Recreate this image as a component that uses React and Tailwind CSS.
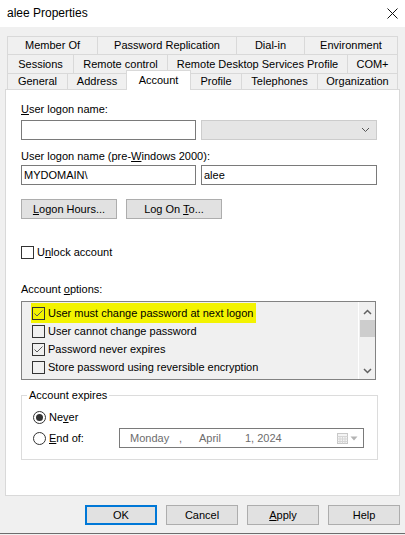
import React from "react";

const tabRows = [
  [
    ["Member Of", 90],
    ["Password Replication", 139],
    ["Dial-in", 68],
    ["Environment", 94],
  ],
  [
    ["Sessions", 66],
    ["Remote control", 94],
    ["Remote Desktop Services Profile", 180],
    ["COM+", 51],
  ],
];

const lastRow = [
  ["General", 60],
  ["Address", 59],
  ["Account", 65],
  ["Profile", 50],
  ["Telephones", 76],
  ["Organization", 81],
];

const options = [
  { label: "User must change password at next logon", checked: true, marked: true },
  { label: "User cannot change password", checked: false },
  { label: "Password never expires", checked: true },
  { label: "Store password using reversible encryption", checked: false },
];

const Check = ({ checked }) => (
  <span className="w-[13px] h-[13px] border border-[#333333] flex items-center justify-center shrink-0">
    {checked && (
      <svg width="11" height="11" viewBox="0 0 11 11">
        <path d="M1.5 5.5 L4 8 L9.5 2.5" stroke="#5a5a5a" strokeWidth="1" fill="none" />
      </svg>
    )}
  </span>
);

const Radio = ({ on }) => (
  <span className="w-[13px] h-[13px] rounded-full border border-[#333333] flex items-center justify-center shrink-0">
    {on && <span className="w-[7px] h-[7px] rounded-full bg-[#333333]" />}
  </span>
);

const Tab = ({ label, width, last }) => (
  <div
    className={`h-full flex items-center justify-center border-t border-l border-[#d9d9d9] ${last ? "border-r" : ""}`}
    style={{ width }}
  >
    {label}
  </div>
);

const Button = ({ children, main }) => (
  <button
    className={`w-[72px] h-[20px] flex items-center justify-center bg-[#e1e1e1] ${
      main ? "border-2 border-[#0078d7]" : "border border-[#adadad]"
    }`}
  >
    <span>{children}</span>
  </button>
);

export default function App() {
  return (
    <div className="w-[405px] h-[535px] bg-[#f0f0f0] flex flex-col text-[11px] leading-[13px] text-black font-['Liberation_Sans',Arial,sans-serif] overflow-hidden">
      {/* Title bar */}
      <div className="h-[27px] bg-white flex items-center justify-between pl-[7px] pr-[7px] shrink-0">
        <span className="text-[12px]">alee Properties</span>
        <svg width="11" height="11" viewBox="0 0 11 11">
          <path d="M0.5 0.5 L10.5 10.5 M10.5 0.5 L0.5 10.5" stroke="#111" strokeWidth="1" />
        </svg>
      </div>

      {/* Tabs */}
      <div className="pt-[9px] px-[7px]">
        <div className="flex h-[18px]">
          {tabRows[0].map(([l, w], i) => (
            <Tab key={l} label={l} width={w} last={i === 3} />
          ))}
        </div>
        <div className="flex h-[19px]">
          {tabRows[1].map(([l, w], i) => (
            <Tab key={l} label={l} width={w} last={i === 3} />
          ))}
        </div>
        <div className="flex h-[16px] items-start">
          {lastRow.map(([l, w], i) =>
            l === "Account" ? (
              <div
                key={l}
                className="relative z-10 -mt-[3px] h-[20px] bg-white border-t border-l border-r border-[#d9d9d9] flex items-start justify-center pt-[3px]"
                style={{ width: w }}
              >
                {l}
              </div>
            ) : (
              <div
                key={l}
                className={`h-full flex items-center justify-center border-t border-[#d9d9d9] ${
                  l === "Profile" ? "" : "border-l"
                } ${i === lastRow.length - 1 ? "border-r" : ""}`}
                style={{ width: w }}
              >
                {l}
              </div>
            )
          )}
        </div>
      </div>

      {/* Panel */}
      <div className="mx-[5px] h-[407px] bg-white border border-[#d9d9d9] pl-[15px] pt-[13px] shrink-0">
        <div>
          <span className="underline">U</span>ser logon name:
        </div>
        <div className="mt-[4px] flex gap-[5px]">
          <div className="w-[175px] h-[20px] border border-[#7a7a7a] bg-white" />
          <div className="w-[176px] h-[20px] border border-[#cccccc] bg-[#e5e5e5] flex items-center justify-end pr-[6px]">
            <svg width="9" height="6" viewBox="0 0 9 6">
              <path d="M1 1 L4.5 4.5 L8 1" stroke="#555" strokeWidth="1" fill="none" />
            </svg>
          </div>
        </div>

        <div className="mt-[10px]">
          User logon name (pre-<span className="underline">W</span>indows 2000):
        </div>
        <div className="mt-[2px] flex gap-[5px]">
          <div className="w-[175px] h-[20px] border border-[#7a7a7a] bg-white flex items-center pl-[2px]">
            MYDOMAIN\
          </div>
          <div className="w-[176px] h-[20px] border border-[#7a7a7a] bg-white flex items-center pl-[2px]">
            alee
          </div>
        </div>

        <div className="mt-[14px] flex gap-[9px]">
          <button className="w-[96px] h-[20px] bg-[#e1e1e1] border border-[#adadad] flex items-center justify-center">
            <span>
              <span className="underline">L</span>ogon Hours...
            </span>
          </button>
          <button className="w-[96px] h-[20px] bg-[#e1e1e1] border border-[#adadad] flex items-center justify-center">
            <span>
              Log On <span className="underline">T</span>o...
            </span>
          </button>
        </div>

        <div className="mt-[27px] flex items-center gap-[3px]">
          <Check />
          <span>
            U<span className="underline">n</span>lock account
          </span>
        </div>

        <div className="mt-[24px]">
          Account <span className="underline">o</span>ptions:
        </div>
        <div className="mt-[5px] w-[355px] h-[79px] border border-[#828282] bg-[#f0f0f0] flex">
          <div className="flex-1 pt-[2px] pl-[10px]">
            {options.map((o) => (
              <div key={o.label} className="h-[18px] flex items-center">
                {o.marked ? (
                  <div className="h-[20px] flex items-center gap-[3px] bg-[#f3f300] pl-[1px] pr-[3px] -ml-[1px]">
                    <Check checked />
                    <span>{o.label}</span>
                  </div>
                ) : (
                  <div className="flex items-center gap-[3px]">
                    <Check checked={o.checked} />
                    <span>{o.label}</span>
                  </div>
                )}
              </div>
            ))}
          </div>
          <div className="w-[17px] border-l border-white flex flex-col items-center justify-between pt-[7px] pb-[5px]">
            <div className="flex flex-col items-center gap-[5px] w-full">
              <svg width="9" height="6" viewBox="0 0 9 6">
                <path d="M1 5 L4.5 1.5 L8 5" stroke="#606060" strokeWidth="1.5" fill="none" />
              </svg>
              <div className="w-[15px] h-[17px] bg-[#cdcdcd]" />
            </div>
            <svg width="9" height="6" viewBox="0 0 9 6">
              <path d="M1 1 L4.5 4.5 L8 1" stroke="#606060" strokeWidth="1.5" fill="none" />
            </svg>
          </div>
        </div>

        <fieldset className="mt-[9px] w-[357px] border border-[#dcdcdc] pl-[11px] pb-[11px]">
          <legend className="-ml-[6px] px-[2px] leading-[13px]">Account expires</legend>
          <div className="mt-[8px] h-[14px] flex items-center gap-[3px]">
            <Radio on />
            <span>
              Ne<span className="underline">v</span>er
            </span>
          </div>
          <div className="mt-[4px] h-[20px] flex items-center">
            <div className="w-[86px] flex items-center gap-[3px]">
              <Radio />
              <span>
                <span className="underline">E</span>nd of:
              </span>
            </div>
            <div className="w-[245px] h-[20px] border border-[#7a7a7a] bg-white flex items-center pl-[10px] pr-[5px] text-[#6d6d6d]">
              <span className="w-[49px]">Monday</span>
              <span className="w-[20px]">,</span>
              <span className="w-[46px]">April</span>
              <span>1, 2024</span>
              <span className="ml-auto flex items-center gap-[2px]">
                <svg width="11" height="11" viewBox="0 0 11 11">
                  <rect x="0.5" y="0.5" width="10" height="10" fill="#f4f4f4" stroke="#c8c8c8" />
                  <path d="M0.5 3.5 H10.5 M0.5 6 H10.5 M0.5 8.5 H10.5 M3 3.5 V10.5 M5.5 3.5 V10.5 M8 3.5 V10.5" stroke="#d6d6d6" strokeWidth="1" />
                </svg>
                <svg width="8" height="5" viewBox="0 0 8 5">
                  <path d="M0.5 0.5 H7.5 L4 4.5 Z" fill="#b4b4b4" />
                </svg>
              </span>
            </div>
          </div>
        </fieldset>
      </div>

      {/* Buttons */}
      <div className="mt-[9px] flex justify-end gap-[9px] pr-[5px]">
        <Button main>OK</Button>
        <Button>Cancel</Button>
        <Button>
          <span className="underline">A</span>pply
        </Button>
        <Button>Help</Button>
      </div>
      <div className="mt-[8px] h-px bg-[#6d6d6d] shrink-0" />
    </div>
  );
}
